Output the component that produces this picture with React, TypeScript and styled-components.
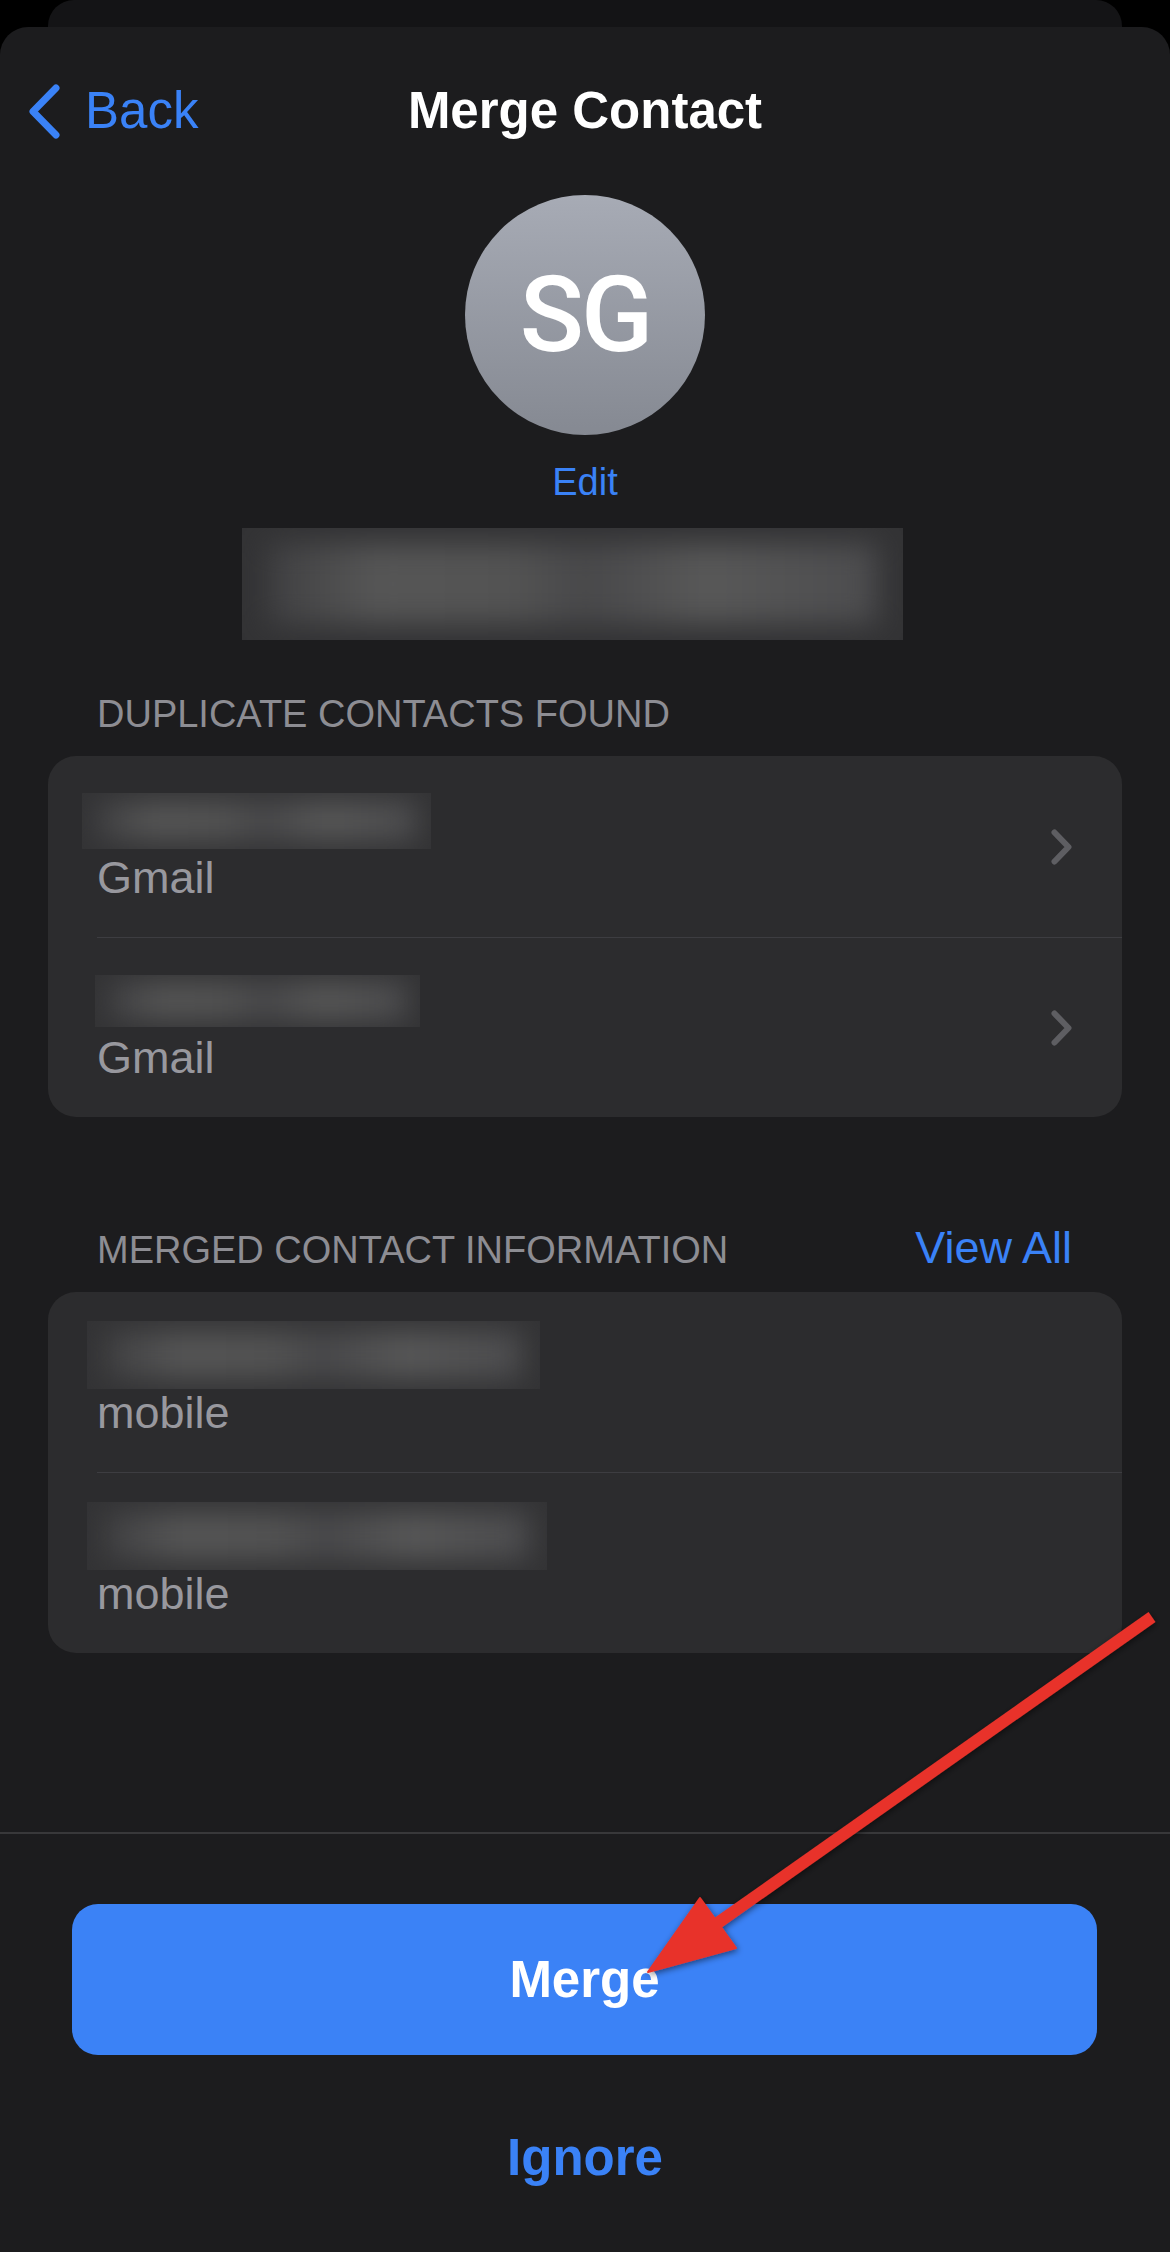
import React from 'react'
import styled, { createGlobalStyle } from 'styled-components'

const GlobalStyle = createGlobalStyle`
  html, body {
    margin: 0;
    padding: 0;
    background: #000;
  }
  body {
    font-family: 'Liberation Sans', Arial, sans-serif;
    -webkit-font-smoothing: antialiased;
  }
`

const Page = styled.main`
  position: relative;
  width: 1170px;
  height: 2252px;
  overflow: hidden;
  background: #000;
`
const BackCard = styled.div`
  height: 27px;
  margin: 0 48px;
  border-radius: 26px 26px 0 0;
  background: #141416;
`
const Sheet = styled.section`
  min-height: 2225px;
  border-radius: 28px 28px 0 0;
  background: #1c1c1e;
  display: flex;
  flex-direction: column;
`
const NavBar = styled.header`
  height: 168px;
  padding: 0 28px;
  display: grid;
  grid-template-columns: 1fr auto 1fr;
  align-items: center;
`
const BackButton = styled.button`
  display: flex;
  align-items: center;
  gap: 24px;
  padding: 0;
  border: 0;
  background: none;
  color: #3a82f7;
  font: 400 51px/60px 'Liberation Sans', Arial, sans-serif;
  justify-self: start;
  cursor: pointer;
`
const Title = styled.h1`
  margin: 0;
  color: #fff;
  font: 700 51px/60px 'Liberation Sans', Arial, sans-serif;
`
const Profile = styled.div`
  display: flex;
  flex-direction: column;
  align-items: center;
`
const Avatar = styled.div`
  width: 240px;
  height: 240px;
  border-radius: 50%;
  background: linear-gradient(180deg, #a7abb5 0%, #858992 100%);
  display: flex;
  align-items: center;
  justify-content: center;
  color: #fff;
  font: 500 106px/1 Roboto, 'Liberation Sans', sans-serif;
  letter-spacing: -3px;
`
const EditLink = styled.a`
  margin-top: 24px;
  color: #3a82f7;
  font: 400 38px/46px 'Liberation Sans', Arial, sans-serif;
  cursor: pointer;
`
const Redacted = styled.div<{ $w: number; $h: number; $ml?: number; $mt?: number; $mb?: number }>`
  position: relative;
  width: ${({ $w }) => $w}px;
  height: ${({ $h }) => $h}px;
  margin-left: ${({ $ml = 0 }) => $ml}px;
  margin-top: ${({ $mt = 0 }) => $mt}px;
  margin-bottom: ${({ $mb = 0 }) => $mb}px;
  overflow: hidden;
  background: #333335;
  &::before {
    content: '';
    position: absolute;
    inset: 14% 4%;
    background: linear-gradient(
      90deg,
      #404042 0%,
      #565656 18%,
      #535353 40%,
      #48484a 52%,
      #585858 72%,
      #4c4c4e 100%
    );
    filter: blur(14px);
  }
`
const SectionHeader = styled.div<{ $mt: number }>`
  display: flex;
  justify-content: space-between;
  align-items: baseline;
  margin: ${({ $mt }) => $mt}px 0 19px;
  padding: 0 98px 0 97px;
`
const SectionTitle = styled.h2`
  margin: 0;
  color: #8d8d93;
  font: 400 38px/46px 'Liberation Sans', Arial, sans-serif;
  text-transform: uppercase;
`
const ViewAll = styled.a`
  color: #3a82f7;
  font: 400 45px/46px 'Liberation Sans', Arial, sans-serif;
  cursor: pointer;
`
const Card = styled.div`
  margin: 0 48px;
  border-radius: 28px;
  background: #2c2c2e;
  overflow: hidden;
`
const Row = styled.div`
  display: flex;
  align-items: center;
  margin-left: 49px;
  padding-right: 50px;
  & + & {
    border-top: 1px solid #3d3d41;
  }
`
const RowText = styled.div`
  flex: 1;
  display: flex;
  flex-direction: column;
  padding-bottom: 32px;
`
const RowLabel = styled.span`
  color: #98989e;
  font: 400 45px/54px 'Liberation Sans', Arial, sans-serif;
`
const Footer = styled.footer`
  margin-top: 179px;
  border-top: 2px solid #38383a;
  display: flex;
  flex-direction: column;
  align-items: stretch;
`
const PrimaryButton = styled.button`
  margin: 70px 73px 0 72px;
  height: 151px;
  border: 0;
  border-radius: 26px;
  background: #3b82f6;
  color: #fff;
  font: 700 51px/60px 'Liberation Sans', Arial, sans-serif;
  cursor: pointer;
`
const TextButton = styled.button`
  margin-top: 72px;
  border: 0;
  background: none;
  color: #3a82f7;
  font: 700 51px/60px 'Liberation Sans', Arial, sans-serif;
  cursor: pointer;
`
const Annotation = styled.svg`
  position: absolute;
  top: 0;
  left: 0;
  pointer-events: none;
`

const ChevronLeft = () => (
  <svg width="33" height="55" viewBox="0 0 33 55" fill="none">
    <path d="M28 4 L5 27.5 L28 51" stroke="#3a82f7" strokeWidth="7" strokeLinecap="round" strokeLinejoin="round" />
  </svg>
)

const ChevronRight = () => (
  <svg width="21" height="36" viewBox="0 0 21 36" fill="none">
    <path d="M3.5 3.5 L17.5 18 L3.5 32.5" stroke="#5e5e62" strokeWidth="6" strokeLinecap="round" strokeLinejoin="round" />
  </svg>
)

type Entry = { w: number; h: number; ml: number; mt: number; mb: number; label: string }

const duplicates: Entry[] = [
  { w: 349, h: 56, ml: -15, mt: 37, mb: 2, label: 'Gmail' },
  { w: 325, h: 52, ml: -2, mt: 37, mb: 4, label: 'Gmail' }
]

const merged: Entry[] = [
  { w: 453, h: 68, ml: -10, mt: 29, mb: -3, label: 'mobile' },
  { w: 460, h: 68, ml: -10, mt: 29, mb: -3, label: 'mobile' }
]

const App: React.FC = () => {
  return (
    <Page>
      <GlobalStyle />
      <BackCard />
      <Sheet>
        <NavBar>
          <BackButton>
            <ChevronLeft />
            Back
          </BackButton>
          <Title>Merge Contact</Title>
          <span />
        </NavBar>
        <Profile>
          <Avatar>SG</Avatar>
          <EditLink>Edit</EditLink>
          <Redacted $w={661} $h={112} $ml={-25} $mt={23} />
        </Profile>

        <SectionHeader $mt={51}>
          <SectionTitle>Duplicate Contacts Found</SectionTitle>
        </SectionHeader>
        <Card>
          {duplicates.map((item, i) => (
            <Row key={i}>
              <RowText>
                <Redacted $w={item.w} $h={item.h} $ml={item.ml} $mt={item.mt} $mb={item.mb} />
                <RowLabel>{item.label}</RowLabel>
              </RowText>
              <ChevronRight />
            </Row>
          ))}
        </Card>

        <SectionHeader $mt={108}>
          <SectionTitle>Merged Contact Information</SectionTitle>
          <ViewAll>View All</ViewAll>
        </SectionHeader>
        <Card>
          {merged.map((item, i) => (
            <Row key={i}>
              <RowText>
                <Redacted $w={item.w} $h={item.h} $ml={item.ml} $mt={item.mt} $mb={item.mb} />
                <RowLabel>{item.label}</RowLabel>
              </RowText>
            </Row>
          ))}
        </Card>

        <Footer>
          <PrimaryButton>Merge</PrimaryButton>
          <TextButton>Ignore</TextButton>
        </Footer>
      </Sheet>

      {/* red callout arrow drawn over the screenshot */}
      <Annotation width="1170" height="2252" viewBox="0 0 1170 2252">
        <defs>
          <filter id="soft" x="-10%" y="-10%" width="120%" height="120%">
            <feGaussianBlur in="SourceAlpha" stdDeviation="3" result="b" />
            <feOffset dx="1" dy="2" result="o" />
            <feComponentTransfer in="o" result="s">
              <feFuncA type="linear" slope="0.5" />
            </feComponentTransfer>
            <feMerge>
              <feMergeNode in="s" />
              <feMergeNode in="SourceGraphic" />
            </feMerge>
          </filter>
        </defs>
        <g filter="url(#soft)" fill="#e8332a" stroke="#e8332a">
          <line x1="1152" y1="1617" x2="712" y2="1927" strokeWidth="12" />
          <polygon points="648,1972 700,1898 736,1948" strokeWidth="2" strokeLinejoin="round" />
        </g>
      </Annotation>
    </Page>
  )
}

export default App
